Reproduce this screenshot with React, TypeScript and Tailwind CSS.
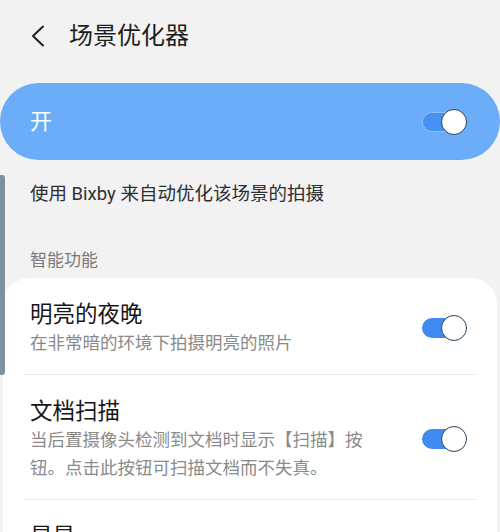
import React from "react";

function Toggle({ inPill = false }: { inPill?: boolean }) {
  return (
    <div className="relative w-[45px] h-[28px] shrink-0">
      <div
        className={
          inPill
            ? "absolute left-0 top-[4px] w-[38px] h-[20px] rounded-full bg-[#4592f4] border border-[#8fc1fb]"
            : "absolute left-0 top-[4px] w-[38px] h-[20px] rounded-full bg-[#3f8bf1]"
        }
      />
      <div className="absolute right-0 top-[1px] w-[26px] h-[26px] rounded-full bg-white border-[1.5px] border-[#2a4257]" />
    </div>
  );
}

export default function App() {
  const font = { fontFamily: 'Roboto, "Noto Sans CJK SC", sans-serif' };
  return (
    <div
      className="relative w-[500px] h-[532px] overflow-hidden bg-[#f2f2f2]"
      style={font}
    >
      {/* header */}
      <div className="h-[72px] flex items-center pl-[30px]">
        <svg width="16" height="22" viewBox="0 0 16 22" className="shrink-0">
          <polyline
            points="13,1.5 3,11 13,20.5"
            fill="none"
            stroke="#222"
            strokeWidth="2"
            strokeLinecap="round"
            strokeLinejoin="round"
          />
        </svg>
        <div className="ml-[23px] text-[24px] leading-[32px] text-[#1e1e1e]">
          场景优化器
        </div>
      </div>

      {/* on pill */}
      <div className="mt-[11px] h-[77px] rounded-full bg-[#6cadfa] flex items-center justify-between pl-[30px] pr-[33px]">
        <div className="text-[22px] leading-[30px] text-white">开</div>
        <Toggle inPill />
      </div>

      <div className="mt-[21px] pl-[30px] text-[18.5px] leading-[26px] text-[#2f2f2f]">
        使用 Bixby 来自动优化该场景的拍摄
      </div>

      <div className="mt-[42px] pl-[30px] text-[17px] leading-[22px] text-[#7a7a7a]">
        智能功能
      </div>

      {/* card */}
      <div className="mt-[7px] mx-[3px] rounded-t-[26px] bg-white px-[21px]">
        <div className="flex items-center justify-between pt-[21px] pb-[17px] pl-[6px] pr-[9px]">
          <div>
            <div className="text-[22.5px] leading-[30px] text-[#161616]">
              明亮的夜晚
            </div>
            <div className="text-[17.5px] leading-[28px] text-[#8a8a8a]">
              在非常暗的环境下拍摄明亮的照片
            </div>
          </div>
          <Toggle />
        </div>
        <div className="h-px bg-[#e8e8e8]" />
        <div className="flex items-center justify-between pt-[21px] pb-[17px] pl-[6px] pr-[9px]">
          <div className="max-w-[345px]">
            <div className="text-[22.5px] leading-[30px] text-[#161616]">
              文档扫描
            </div>
            <div className="text-[17.5px] leading-[28px] text-[#8a8a8a]">
              当后置摄像头检测到文档时显示【扫描】按钮。点击此按钮可扫描文档而不失真。
            </div>
          </div>
          <Toggle />
        </div>
        <div className="h-px bg-[#e8e8e8]" />
        <div className="pt-[21px] pb-[17px] pl-[6px] pr-[9px]">
          <div className="text-[22.5px] leading-[30px] text-[#161616]">
            星星
          </div>
        </div>
      </div>

      {/* scroll indicator */}
      <div className="absolute left-0 top-[175px] w-[5px] h-[200px] rounded-r-[3px] bg-[#7e929d]" />
    </div>
  );
}
